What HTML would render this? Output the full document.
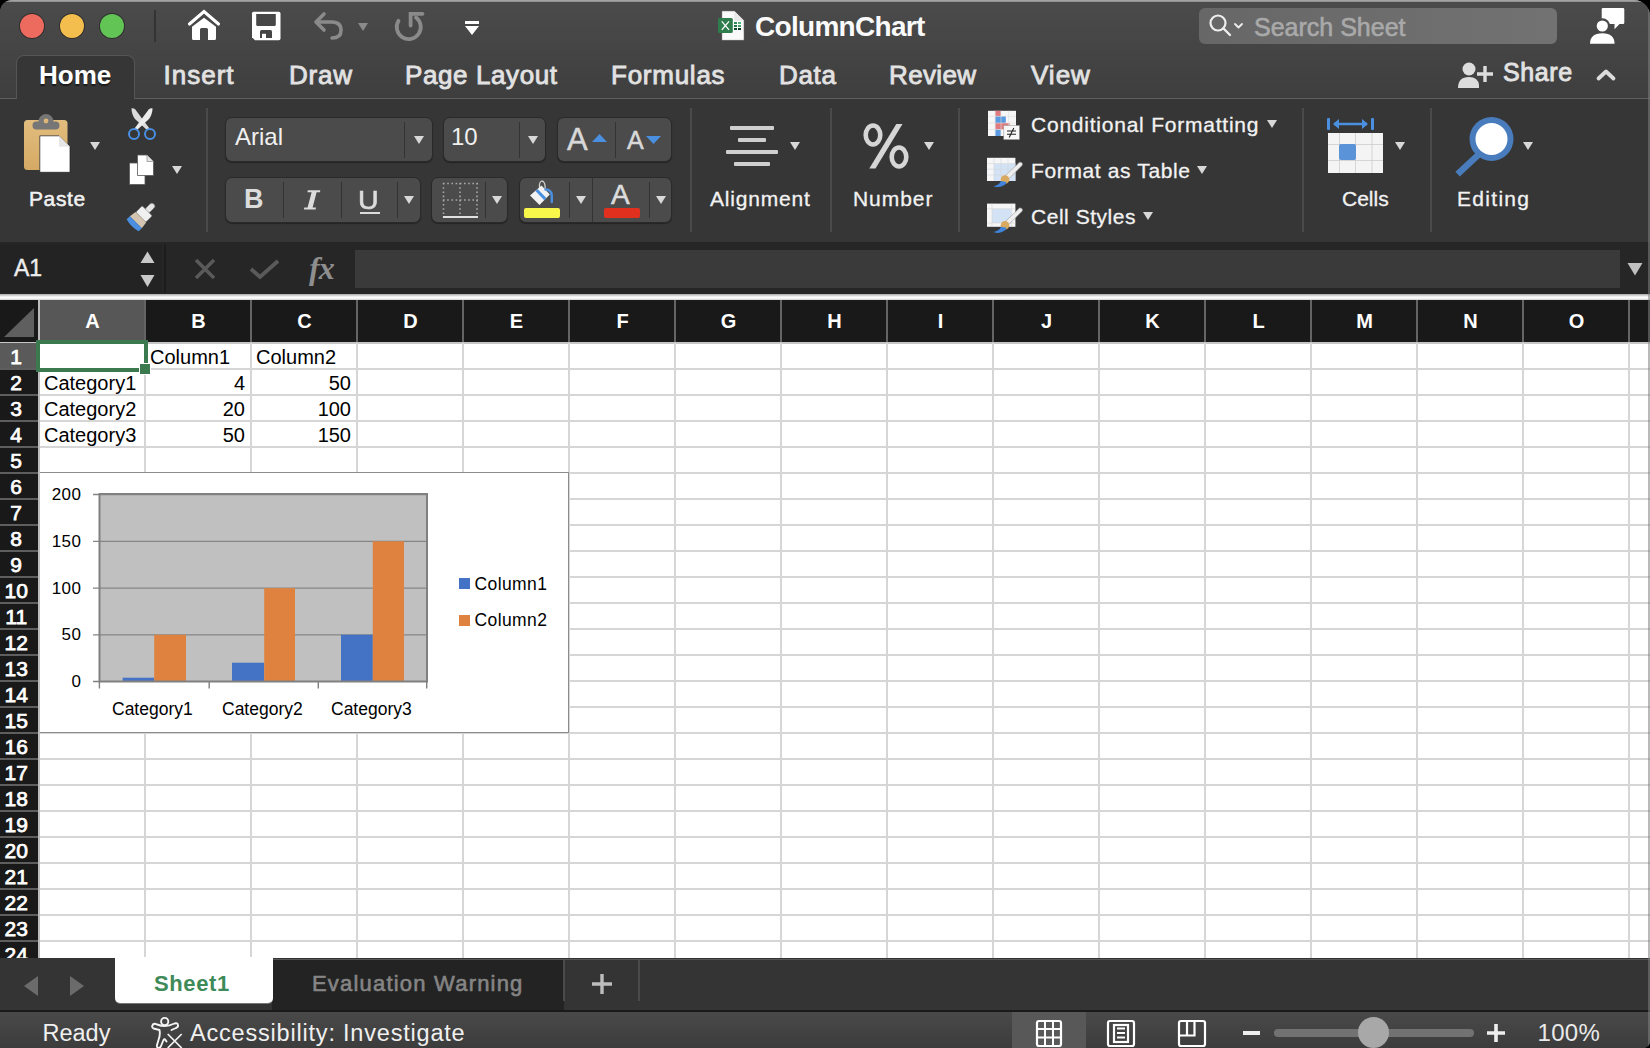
<!DOCTYPE html>
<html><head><meta charset="utf-8">
<style>
*{margin:0;padding:0;box-sizing:border-box}
html,body{width:1650px;height:1048px;overflow:hidden;background:#000;font-family:"Liberation Sans",sans-serif}
.a{position:absolute}
#win{position:absolute;left:0;top:0;width:1650px;height:1048px;border-radius:12px 16px 7px 0;overflow:hidden;background:#3b3b3b}
.t{position:absolute;white-space:nowrap;line-height:1}
.dd{position:absolute;width:0;height:0;border-left:5px solid transparent;border-right:5px solid transparent;border-top:8px solid #d8d8d8}
.sep{position:absolute;width:2px;background:#4a4a4a}
.box{position:absolute;background:#4b4b4b;border:1px solid #2a2a2a;border-radius:7px;box-shadow:0 1px 1px rgba(0,0,0,.35)}
.bsep{position:absolute;width:1px;background:#333}
.rib{color:#f2f2f2;font-size:21px;-webkit-text-stroke:.3px #f2f2f2}
</style></head><body>
<div id="win">
  <!-- title bar -->
  <div class="a" style="left:0;top:0;width:1650px;height:99px;background:linear-gradient(#4b4b4b,#3e3e3e)"></div>
  <div class="a" style="left:0;top:0;width:1650px;height:2px;background:linear-gradient(#ababab,#8a8a8a)"></div>
  <!-- traffic lights -->
  <div class="a" style="left:20px;top:14px;width:24px;height:24px;border-radius:50%;background:#ed6a5e;box-shadow:0 0 0 1px #2f2f2f"></div>
  <div class="a" style="left:60px;top:14px;width:24px;height:24px;border-radius:50%;background:#f4be4f;box-shadow:0 0 0 1px #2f2f2f"></div>
  <div class="a" style="left:100px;top:14px;width:24px;height:24px;border-radius:50%;background:#61c454;box-shadow:0 0 0 1px #2f2f2f"></div>
  <div class="a" style="left:154px;top:10px;width:2px;height:32px;background:#333"></div>


  <!-- tabs row -->
  <div class="a" style="left:0;top:98px;width:1650px;height:1px;background:#5e5e5e"></div>
  <div class="a" style="left:16px;top:55px;width:119px;height:45px;background:#363636;border:1px solid #555;border-bottom:none;border-radius:8px 8px 0 0"></div>

  <!-- ribbon body -->
  <div class="a" style="left:0;top:99px;width:1650px;height:143px;background:#363636"></div>

  <!-- formula bar -->
  <div class="a" style="left:0;top:242px;width:1650px;height:52px;background:#262626"></div>

  <!-- separator -->
  <div class="a" style="left:0;top:294px;width:1650px;height:6px;background:linear-gradient(#a9a9a9,#f2f2f2 45%,#ffffff 65%,#cfcfcf)"></div>

  <!-- grid area -->
  <div class="a" style="left:0;top:300px;width:1650px;height:658px;background:#fff"></div>

  <!-- sheet tabs -->
  <div class="a" style="left:0;top:958px;width:1650px;height:52px;background:#343434"></div>
  <!-- status bar -->
  <div class="a" style="left:0;top:1010px;width:1650px;height:38px;background:#3e3e3e"></div>
  <!-- quick access icons -->
  <svg class="a" style="left:184px;top:6px" width="40" height="38" viewBox="184 6 40 38">
    <path d="M189.5 24 L204 11.5 L218.5 24" fill="none" stroke="#fff" stroke-width="3.1" stroke-linecap="round" stroke-linejoin="miter"/>
    <path d="M192 26.7 L204 17.8 L216 26.7 V38.5 Q216 40 214.5 40 H208 V29.5 Q208 28 206.5 28 H201.5 Q200 28 200 29.5 V40 H193.5 Q192 40 192 38.5 Z" fill="#fff"/>
  </svg>
  <svg class="a" style="left:250px;top:10px" width="32" height="32" viewBox="250 10 32 32">
    <path d="M253.5 11.7 H278.8 Q280.5 11.7 280.5 13.4 V38.6 Q280.5 40.3 278.8 40.3 H255 L252 37.3 V13.2 Q252 11.7 253.5 11.7 Z" fill="#fff"/>
    <path d="M256.2 14 H275.8 V24.5 Q275.8 26 274.3 26 H257.7 Q256.2 26 256.2 24.5 Z" fill="#474747"/>
    <path d="M260 38 V31.5 Q260 30 261.5 30 H270.5 Q272 30 272 31.5 V38 Z" fill="#444"/>
    <rect x="262" y="33.8" width="4" height="4.2" fill="#fff"/>
  </svg>
  <svg class="a" style="left:312px;top:11px" width="34" height="30" viewBox="0 0 34 30">
    <path d="M12 3 L4 11 L12 19" fill="none" stroke="#8a8a8a" stroke-width="3.6" stroke-linecap="round" stroke-linejoin="round"/>
    <path d="M5 11 H20 Q29 11 29 19.5 Q29 27 20 27" fill="none" stroke="#8a8a8a" stroke-width="3.6" stroke-linecap="round"/>
  </svg>
  <div class="dd" style="left:358px;top:23px;border-top-color:#8a8a8a;border-left-width:5px;border-right-width:5px;border-top-width:8px"></div>
  <svg class="a" style="left:390px;top:6px" width="40" height="40" viewBox="390 6 40 40">
    <path d="M398.5 20.8 A12 12 0 1 0 416 17.5" fill="none" stroke="#8a8a8a" stroke-width="3.8" stroke-linecap="round"/>
    <path d="M410.6 25.5 V13.8 H422.5" fill="none" stroke="#8a8a8a" stroke-width="3.8" stroke-linecap="round" stroke-linejoin="miter"/>
  </svg>
  <div class="a" style="left:465px;top:21px;width:14px;height:3px;background:#fff"></div>
  <div class="dd" style="left:465px;top:26px;border-left-width:7px;border-right-width:7px;border-top:9px solid #fff"></div>

  <!-- title -->
  <svg class="a" style="left:714px;top:8px" width="34" height="36" viewBox="714 8 34 36">
    <path d="M721.7 10.8 H734.2 L744.2 20.8 V40.4 H721.7 Z" fill="#fafafa" stroke="#2a2a2a" stroke-width=".6"/>
    <path d="M734.2 10.8 V20.8 H744.2 Z" fill="#e9e9e9"/>
    <g fill="#2e8b57"><rect x="734" y="22" width="3" height="2"/><rect x="738" y="22" width="3" height="2" fill="#4cb77a"/><rect x="734" y="25" width="3" height="2" fill="#217346"/><rect x="738" y="25" width="3" height="2" fill="#3fa468"/><rect x="734" y="28" width="3" height="2" fill="#0f4a2a"/><rect x="738" y="28" width="3" height="2" fill="#0b3a20"/></g>
    <rect x="718" y="18.1" width="14.8" height="14.8" rx="1.5" fill="#2f7d4c"/>
    <path d="M721.8 21.3 L729 29.8 M729 21.3 L721.8 29.8" stroke="#fff" stroke-width="1.3"/>
  </svg>
  <div class="t" style="left:755px;top:13.3px;font-size:28px;font-weight:bold;color:#fafafa;letter-spacing:-.7px">ColumnChart</div>

  <!-- search -->
  <div class="a" style="left:1199px;top:8px;width:358px;height:36px;border-radius:6px;background:linear-gradient(90deg,#676767,#727272)"></div>
  <svg class="a" style="left:1208px;top:13px" width="40" height="26" viewBox="0 0 40 26">
    <circle cx="10" cy="10" r="7.5" fill="none" stroke="#eee" stroke-width="2.2"/>
    <path d="M15.5 15.5 L22 22" stroke="#eee" stroke-width="2.4" stroke-linecap="round"/>
    <path d="M27 11 L30.5 14.5 L34 11" fill="none" stroke="#eee" stroke-width="1.8" stroke-linecap="round" stroke-linejoin="round"/>
  </svg>
  <div class="t" style="left:1254px;top:14.8px;font-size:25px;color:#a9a9a9;-webkit-text-stroke:.6px #a9a9a9">Search Sheet</div>
  <!-- person/comment icon -->
  <svg class="a" style="left:1585px;top:4px" width="45" height="44" viewBox="1585 4 45 44">
    <path d="M1603 8 H1623 Q1624.3 8 1624.3 9.3 V22.8 Q1624.3 24.1 1623 24.1 H1619.5 L1614.5 29.3 V24.1 H1603 Q1601.7 24.1 1601.7 22.8 V9.3 Q1601.7 8 1603 8 Z" fill="#fff"/>
    <circle cx="1602.3" cy="26" r="7.8" fill="#484848"/>
    <circle cx="1602.3" cy="26" r="5.6" fill="#fff"/>
    <path d="M1590 43.8 Q1590 33.2 1602.3 33.2 Q1614.6 33.2 1614.6 43.8 Z" fill="#fff"/>
  </svg>

  <!-- tabs -->
  <div class="t" style="left:39px;top:62px;font-size:26px;font-weight:bold;color:#fff;text-shadow:0 2px 1px rgba(0,0,0,.5)">Home</div>
  <div class="t" style="left:163.5px;top:62px;font-size:26px;color:#e2e2e2;-webkit-text-stroke:.85px #e2e2e2;letter-spacing:1.0px">Insert</div>
  <div class="t" style="left:289px;top:62px;font-size:26px;color:#e2e2e2;-webkit-text-stroke:.85px #e2e2e2;letter-spacing:0.8px">Draw</div>
  <div class="t" style="left:405px;top:62px;font-size:26px;color:#e2e2e2;-webkit-text-stroke:.85px #e2e2e2;letter-spacing:0.6px">Page Layout</div>
  <div class="t" style="left:611px;top:62px;font-size:26px;color:#e2e2e2;-webkit-text-stroke:.85px #e2e2e2;letter-spacing:0.75px">Formulas</div>
  <div class="t" style="left:779px;top:62px;font-size:26px;color:#e2e2e2;-webkit-text-stroke:.85px #e2e2e2;letter-spacing:0.65px">Data</div>
  <div class="t" style="left:889px;top:62px;font-size:26px;color:#e2e2e2;-webkit-text-stroke:.85px #e2e2e2;letter-spacing:0.35px">Review</div>
  <div class="t" style="left:1031px;top:62px;font-size:26px;color:#e2e2e2;-webkit-text-stroke:.85px #e2e2e2;letter-spacing:1.0px">View</div>
  <svg class="a" style="left:1458px;top:61px" width="38" height="28" viewBox="0 0 38 28">
    <circle cx="11" cy="8" r="6.5" fill="#ddd"/>
    <path d="M0 27 Q0 16 11 16 Q20 16 21 24 V27 Z" fill="#ddd"/>
    <path d="M27 5 V21 M19 13 H35" stroke="#ddd" stroke-width="3.4"/>
  </svg>
  <div class="t" style="left:1503px;top:60px;font-size:25px;color:#e2e2e2;-webkit-text-stroke:.9px #e2e2e2;letter-spacing:.6px">Share</div>
  <svg class="a" style="left:1594px;top:66px" width="24" height="16" viewBox="0 0 24 16">
    <path d="M4.5 12.5 L12 5.5 L19.5 12.5" fill="none" stroke="#dcdcdc" stroke-width="3.8" stroke-linecap="round" stroke-linejoin="round"/>
  </svg>


  <!-- ===== RIBBON ===== -->
  <!-- paste -->
  <svg class="a" style="left:22px;top:112px" width="52" height="62" viewBox="0 0 52 62">
    <defs><linearGradient id="cbg" x1="0" y1="0" x2="0" y2="1"><stop offset="0" stop-color="#e2bd7e"/><stop offset="1" stop-color="#d5a964"/></linearGradient></defs>
    <rect x="2" y="8" width="43.5" height="50" rx="3.5" fill="url(#cbg)"/>
    <path d="M14.5 9.5 H16.5 A7.5 7.5 0 0 1 31.5 9.5 H33.5 Q37.5 9.5 37.5 13.5 Q37.5 17.5 33.5 17.5 H14.5 Q10.5 17.5 10.5 13.5 Q10.5 9.5 14.5 9.5 Z" fill="#767676"/>
    <circle cx="24" cy="9" r="2.4" fill="#dcb677"/>
    <path d="M17.8 23.8 H37 L48 34.8 V60.3 H17.8 Z" fill="#fff" stroke="#1f1f1f" stroke-width=".7"/>
    <path d="M37 23.8 V34.8 H48 Z" fill="#e6e6e6"/>
  </svg>
  <div class="dd" style="left:90px;top:142px"></div>
  <div class="t rib" style="left:29px;top:188px;letter-spacing:.6px;-webkit-text-stroke:.5px #f2f2f2">Paste</div>
  <!-- scissors -->
  <svg class="a" style="left:120px;top:104px" width="40" height="40" viewBox="120 104 40 40">
    <path d="M131.5 108.2 Q134 108 135.3 109.5 L149.5 128.5 L147.2 130.3 L135 119 Q131.5 114 131.5 108.2 Z" fill="#dcdcdc"/>
    <path d="M152.5 108.2 Q150 108 148.7 109.5 L134.5 128.5 L136.8 130.3 L149 119 Q152.5 114 152.5 108.2 Z" fill="#ececec"/>
    <circle cx="134" cy="134" r="5" fill="none" stroke="#4a8fe0" stroke-width="2"/>
    <circle cx="150" cy="134" r="5" fill="none" stroke="#4a8fe0" stroke-width="2"/>
  </svg>
  <!-- copy -->
  <svg class="a" style="left:128px;top:154px" width="30" height="32" viewBox="0 0 30 32">
    <path d="M1.5 9 H17 V30.5 H1.5 Z" fill="#fff" stroke="#555" stroke-width=".8"/>
    <path d="M9.5 1 H19 L25.5 7.5 V21.5 H9.5 Z" fill="#fff" stroke="#555" stroke-width=".8"/>
    <path d="M19 1 V7.5 H25.5" fill="#e5e5e5" stroke="#888" stroke-width=".7"/>
  </svg>
  <div class="dd" style="left:172px;top:166px"></div>
  <!-- format painter -->
  <svg class="a" style="left:120px;top:198px" width="42" height="36" viewBox="120 198 42 36">
    <g transform="translate(141.5 216.5) rotate(45)">
      <rect x="-2.8" y="-17.5" width="5.6" height="11" rx="2.8" fill="#e6e6e6" stroke="#8a8a8a" stroke-width=".6"/>
      <rect x="-7" y="-8" width="14" height="9" rx="1.2" fill="#f0f0f0" stroke="#8a8a8a" stroke-width=".6"/>
      <path d="M-7.5 1 L7.5 1 L8.5 8 L-8.5 8 Z" fill="#d3c5b0"/>
      <path d="M-8.5 8 L8.5 8 L8.5 12.5 Q0 15 -8.5 12.5 Z" fill="#4a8fe0"/>
    </g>
  </svg>
  <div class="sep" style="left:206px;top:108px;height:124px"></div>

  <!-- font group -->
  <div class="box" style="left:225px;top:117px;width:208px;height:45px"></div>
  <div class="bsep" style="left:404px;top:122px;height:36px"></div>
  <div class="t" style="left:235px;top:125px;font-size:24px;color:#f0f0f0">Arial</div>
  <div class="dd" style="left:414px;top:136px"></div>
  <div class="box" style="left:443px;top:117px;width:103px;height:45px"></div>
  <div class="bsep" style="left:519px;top:122px;height:36px"></div>
  <div class="t" style="left:451px;top:125px;font-size:24px;color:#f0f0f0">10</div>
  <div class="dd" style="left:528px;top:136px"></div>
  <div class="box" style="left:557px;top:117px;width:115px;height:45px"></div>
  <div class="bsep" style="left:615px;top:122px;height:36px"></div>
  <div class="t" style="left:567px;top:124px;font-size:31px;color:#d8d8d8;-webkit-text-stroke:.5px #d8d8d8">A</div>
  <svg class="a" style="left:592px;top:133px" width="15" height="9"><path d="M0 9 L7.5 1 L15 9 Z" fill="#4a8fe0"/></svg>
  <div class="t" style="left:627px;top:128px;font-size:25px;color:#d8d8d8;-webkit-text-stroke:.5px #d8d8d8">A</div>
  <svg class="a" style="left:646px;top:136px" width="15" height="9"><path d="M0 0 L15 0 L7.5 8 Z" fill="#4a8fe0"/></svg>

  <div class="box" style="left:225px;top:177px;width:196px;height:45.5px"></div>
  <div class="bsep" style="left:283px;top:182px;height:36px"></div>
  <div class="bsep" style="left:341px;top:182px;height:36px"></div>
  <div class="bsep" style="left:397px;top:182px;height:36px"></div>
  <div class="t" style="left:244px;top:186px;font-size:27px;font-weight:bold;color:#dcdcdc">B</div>
  <svg class="a" style="left:300px;top:186px" width="26" height="28" viewBox="300 186 26 28">
    <path d="M307.8 190.2 H320.3 L320 192.3 H316.6 L312.6 207.4 H316 L315.6 209.6 H303.9 L304.3 207.4 H307.6 L311.6 192.3 H307.4 Z" fill="#dcdcdc"/>
  </svg>
  <div class="t" style="left:358px;top:187px;font-size:26px;color:#dcdcdc;-webkit-text-stroke:.6px #dcdcdc;transform:scaleX(1.1);transform-origin:left top">U</div>
  <div class="a" style="left:360px;top:212px;width:20px;height:2px;background:#dcdcdc"></div>
  <div class="dd" style="left:404px;top:196px"></div>

  <div class="box" style="left:431px;top:177px;width:77px;height:45.5px"></div>
  <div class="bsep" style="left:485px;top:182px;height:36px"></div>
  <svg class="a" style="left:442px;top:182px" width="37" height="37" viewBox="0 0 37 37">
    <g fill="none" stroke="#a8a8a8" stroke-width="1.6" stroke-dasharray="1.6 2.6">
      <path d="M1.5 1 V35 M18 1 V35 M35 1 V35 M1 1.5 H36 M1 18 H36"/>
    </g>
    <path d="M1 35 H36" stroke="#e0e0e0" stroke-width="2"/>
  </svg>
  <div class="dd" style="left:492px;top:196px"></div>

  <div class="box" style="left:519px;top:177px;width:153px;height:45.5px"></div>
  <div class="bsep" style="left:569px;top:182px;height:36px"></div>
  <div class="a" style="left:592px;top:178px;width:1px;height:44px;background:#333"></div>
  <div class="bsep" style="left:649px;top:182px;height:36px"></div>
  <svg class="a" style="left:525px;top:178px" width="32" height="30" viewBox="525 178 32 30">
    <path d="M540 190.5 Q538.3 182 541.8 181 Q545.5 181 545.3 190.5" fill="none" stroke="#d0d0d0" stroke-width="1.3"/>
    <path d="M541.5 185.5 L549.8 194.5 L539.5 205 L530 195.5 Z" fill="#f2f2f2"/>
    <path d="M537.6 188.9 L546.4 198 L544.3 200.2 L535.4 191 Z" fill="#4a8fe0"/>
    <path d="M545.5 189.5 Q551.5 189.5 551.8 196 L551.8 202" fill="none" stroke="#4a8fe0" stroke-width="2.4" stroke-linecap="round"/>
  </svg>
  <div class="a" style="left:524px;top:208px;width:36px;height:10px;border-radius:2px;background:#f8f64a"></div>
  <div class="dd" style="left:576px;top:196px"></div>
  <div class="t" style="left:611px;top:180.5px;font-size:28px;color:#dcdcdc;-webkit-text-stroke:.6px #dcdcdc">A</div>
  <div class="a" style="left:604px;top:208px;width:36px;height:10px;border-radius:2px;background:#e2301f"></div>
  <div class="dd" style="left:656px;top:196px"></div>
  <div class="sep" style="left:690px;top:108px;height:124px"></div>

  <!-- alignment -->
  <div class="a" style="left:730px;top:126px;width:44px;height:4px;border-radius:1px;background:#cfcfcf"></div>
  <div class="a" style="left:738px;top:138px;width:28px;height:4px;border-radius:1px;background:#cfcfcf"></div>
  <div class="a" style="left:726px;top:150px;width:52px;height:4px;border-radius:1px;background:#cfcfcf"></div>
  <div class="a" style="left:734px;top:162px;width:36px;height:4px;border-radius:1px;background:#cfcfcf"></div>
  <div class="dd" style="left:790px;top:142px"></div>
  <div class="t rib" style="left:710px;top:188px;letter-spacing:.8px">Alignment</div>
  <div class="sep" style="left:830px;top:108px;height:124px"></div>
  <!-- number -->
  <svg class="a" style="left:855px;top:118px" width="60" height="56" viewBox="855 118 60 56">
    <ellipse cx="873" cy="135" rx="7.3" ry="9.5" fill="none" stroke="#d6d6d6" stroke-width="4.6"/>
    <ellipse cx="899" cy="157" rx="7.3" ry="9.5" fill="none" stroke="#d6d6d6" stroke-width="4.6"/>
    <path d="M896.3 124 L902.5 124 L875.5 168.5 L869.3 168.5 Z" fill="#d6d6d6"/>
  </svg>
  <div class="dd" style="left:924px;top:142px"></div>
  <div class="t rib" style="left:853px;top:188px;letter-spacing:.95px">Number</div>
  <div class="sep" style="left:958px;top:108px;height:124px"></div>

  <!-- styles -->
  <svg class="a" style="left:985px;top:108px" width="40" height="34" viewBox="985 108 40 34">
    <rect x="988" y="110.8" width="28" height="25.2" fill="#f7f7f7"/>
    <rect x="995.2" y="110.8" width="5.6" height="5.5" fill="#df7a7e"/>
    <rect x="995.2" y="116.3" width="10.6" height="6.7" fill="#5a9ae2"/>
    <rect x="995.2" y="123" width="14.4" height="6.5" fill="#df7a7e"/>
    <rect x="995.2" y="129.5" width="5.6" height="6.5" fill="#5a9ae2"/>
    <path d="M988 116.3 H1016 M988 123 H1016 M988 129.5 H1016 M995.2 110.8 V136 M1001 110.8 V136 M1008.6 110.8 V136" stroke="#dedede" stroke-width=".6"/>
    <rect x="1003.8" y="125.6" width="15.5" height="13.9" fill="#f8f8f8" stroke="#a0a0a0" stroke-width=".6"/>
    <path d="M1007 131 H1016 M1007 134.3 H1016 M1013.8 128 L1009.2 137.5" stroke="#222" stroke-width="1.1"/>
  </svg>
  <div class="t rib" style="left:1031px;top:114px;letter-spacing:.77px">Conditional Formatting</div>
  <div class="dd" style="left:1267px;top:120px"></div>
  <svg class="a" style="left:985px;top:155px" width="42" height="34" viewBox="985 155 42 34">
    <rect x="987" y="157.8" width="28.4" height="23.2" fill="#f6f6f6"/>
    <rect x="994" y="163.6" width="21.4" height="17.4" fill="#d3e2f4"/>
    <path d="M987 163.6 H1015.4 M987 169.2 H1015.4 M987 175 H1015.4 M994 157.8 V181 M1001 157.8 V181 M1008 157.8 V181" stroke="#d0d6de" stroke-width=".6"/>
    <path d="M1019.5 162.2 Q1023.5 162 1022 165.5 L1008 179.5 L1004.5 176.5 Z" fill="#eeeeee" stroke="#9a9a9a" stroke-width=".6"/>
    <circle cx="1005" cy="179.5" r="4.3" fill="#d9a95f"/>
    <path d="M1001 181 Q999 185.5 993.5 186.2 Q999.5 188.5 1004.5 185 Q1006.5 183.5 1006.5 182 Z" fill="#3f84da"/>
  </svg>
  <div class="t rib" style="left:1031px;top:160px;letter-spacing:.63px">Format as Table</div>
  <div class="dd" style="left:1197px;top:166px"></div>
  <svg class="a" style="left:985px;top:201px" width="42" height="34" viewBox="985 201 42 34">
    <rect x="987" y="203.6" width="28.4" height="23.2" fill="#f6f6f6"/>
    <rect x="992" y="208.7" width="19.6" height="14.3" fill="#d3e2f4"/>
    <path d="M987 208.7 H1015.4 M987 223 H1015.4 M992 203.6 V226.8 M1011.6 203.6 V226.8" stroke="#d6d6d6" stroke-width=".6"/>
    <path d="M1019.5 208 Q1023.5 207.8 1022 211.3 L1008 225.3 L1004.5 222.3 Z" fill="#eeeeee" stroke="#9a9a9a" stroke-width=".6"/>
    <circle cx="1005" cy="225.3" r="4.3" fill="#d9a95f"/>
    <path d="M1001 226.8 Q999 231.3 993.5 232 Q999.5 234.3 1004.5 230.8 Q1006.5 229.3 1006.5 227.8 Z" fill="#3f84da"/>
  </svg>
  <div class="t rib" style="left:1031px;top:206px;letter-spacing:.53px">Cell Styles</div>
  <div class="dd" style="left:1143px;top:212px"></div>
  <div class="sep" style="left:1302px;top:108px;height:124px"></div>

  <!-- cells -->
  <svg class="a" style="left:1326px;top:116px" width="58" height="58" viewBox="0 0 58 58">
    <rect x="1" y="2" width="3" height="12" rx="1" fill="#4a8fe0"/>
    <rect x="45" y="2" width="3" height="12" rx="1" fill="#4a8fe0"/>
    <path d="M8 8 H41" stroke="#4a8fe0" stroke-width="2.6"/>
    <path d="M13 3 L7 8 L13 13 Z M36 3 L42 8 L36 13 Z" fill="#4a8fe0"/>
    <rect x="2" y="17" width="55" height="40" fill="#f4f4f4"/>
    <path d="M2 28.5 H57 M2 44.5 H57 M13.5 17 V57 M29.5 17 V57 M46 17 V57" stroke="#cdcdcd" stroke-width=".8"/>
    <rect x="13" y="28" width="17" height="16" rx="2" fill="#5a93d8"/>
  </svg>
  <div class="dd" style="left:1395px;top:142px"></div>
  <div class="t rib" style="left:1342px;top:188px">Cells</div>
  <div class="sep" style="left:1430px;top:108px;height:124px"></div>
  <!-- editing -->
  <svg class="a" style="left:1450px;top:110px" width="70" height="70" viewBox="1450 110 70 70">
    <defs><filter id="bl" x="-20%" y="-20%" width="140%" height="140%"><feGaussianBlur stdDeviation=".7"/></filter></defs>
    <g filter="url(#bl)">
    <path d="M1476 157 L1460 172" stroke="#4a7cbc" stroke-width="6.5" stroke-linecap="square"/>
    <circle cx="1491.5" cy="139" r="22" fill="#4a7cbc"/>
    <circle cx="1491.5" cy="139" r="16" fill="#fff"/>
    </g>
  </svg>
  <div class="dd" style="left:1523px;top:142px"></div>
  <div class="t rib" style="left:1457px;top:188px;letter-spacing:1.3px">Editing</div>

  <!-- ===== FORMULA BAR ===== -->
  <div class="a" style="left:0;top:244px;width:162px;height:49px;background:#232323"></div>
  <div class="a" style="left:164px;top:244px;width:2px;height:49px;background:#1c1c1c"></div>
  <div class="t" style="left:14px;top:257px;font-size:23px;color:#eeeeee;-webkit-text-stroke:.4px #eee">A1</div>
  <svg class="a" style="left:139px;top:250px" width="17" height="39" viewBox="0 0 17 39">
    <path d="M1.5 13 L8.5 1.5 L15.5 13 Z" fill="#c8c8c8"/>
    <path d="M1.5 25 L15.5 25 L8.5 37 Z" fill="#c8c8c8"/>
  </svg>
  <svg class="a" style="left:193px;top:258px" width="24" height="22" viewBox="0 0 24 22">
    <path d="M3 2 L21 20 M21 2 L3 20" stroke="#5a5a5a" stroke-width="3.5"/>
  </svg>
  <svg class="a" style="left:249px;top:258px" width="31" height="22" viewBox="0 0 31 22">
    <path d="M2 11 L11 19 L29 3" fill="none" stroke="#5a5a5a" stroke-width="3.8"/>
  </svg>
  <div class="t" style="left:309px;top:252px;font-size:32px;font-family:'Liberation Serif',serif;font-style:italic;font-weight:bold;color:#8e8e8e;letter-spacing:-1px">fx</div>
  <div class="a" style="left:355px;top:250px;width:1265px;height:38px;background:#3a3a3a"></div>
  <svg class="a" style="left:1627px;top:262px" width="16" height="14" viewBox="0 0 16 14">
    <path d="M0.5 1 L15.5 1 L8 13.5 Z" fill="#c0c0c0"/>
  </svg>

  <!-- ===== HEADERS ===== -->
  <div class="a" style="left:0;top:300px;width:1650px;height:42px;background:#191919"></div>
  <div class="a" style="left:40px;top:300px;width:105px;height:42px;background:#575757"></div>
  <svg class="a" style="left:0;top:300px" width="38" height="42"><path d="M4 37 L34 37 L34 8 Z" fill="#5f5f5f"/></svg>
  <div class="a" style="left:38px;top:300px;width:2px;height:658px;background:#bdbdbd"></div>
  <div class="a" style="left:0;top:342px;width:1650px;height:2px;background:#c6c6c6"></div>
  <div class="t" style="left:40px;top:311px;width:105px;text-align:center;font-size:20px;font-weight:bold;color:#fff">A</div>
  <div class="a" style="left:144px;top:300px;width:2px;height:42px;background:#646464"></div>
  <div class="t" style="left:146px;top:311px;width:105px;text-align:center;font-size:20px;font-weight:bold;color:#fff">B</div>
  <div class="a" style="left:250px;top:300px;width:2px;height:42px;background:#646464"></div>
  <div class="t" style="left:252px;top:311px;width:105px;text-align:center;font-size:20px;font-weight:bold;color:#fff">C</div>
  <div class="a" style="left:356px;top:300px;width:2px;height:42px;background:#646464"></div>
  <div class="t" style="left:358px;top:311px;width:105px;text-align:center;font-size:20px;font-weight:bold;color:#fff">D</div>
  <div class="a" style="left:462px;top:300px;width:2px;height:42px;background:#646464"></div>
  <div class="t" style="left:464px;top:311px;width:105px;text-align:center;font-size:20px;font-weight:bold;color:#fff">E</div>
  <div class="a" style="left:568px;top:300px;width:2px;height:42px;background:#646464"></div>
  <div class="t" style="left:570px;top:311px;width:105px;text-align:center;font-size:20px;font-weight:bold;color:#fff">F</div>
  <div class="a" style="left:674px;top:300px;width:2px;height:42px;background:#646464"></div>
  <div class="t" style="left:676px;top:311px;width:105px;text-align:center;font-size:20px;font-weight:bold;color:#fff">G</div>
  <div class="a" style="left:780px;top:300px;width:2px;height:42px;background:#646464"></div>
  <div class="t" style="left:782px;top:311px;width:105px;text-align:center;font-size:20px;font-weight:bold;color:#fff">H</div>
  <div class="a" style="left:886px;top:300px;width:2px;height:42px;background:#646464"></div>
  <div class="t" style="left:888px;top:311px;width:105px;text-align:center;font-size:20px;font-weight:bold;color:#fff">I</div>
  <div class="a" style="left:992px;top:300px;width:2px;height:42px;background:#646464"></div>
  <div class="t" style="left:994px;top:311px;width:105px;text-align:center;font-size:20px;font-weight:bold;color:#fff">J</div>
  <div class="a" style="left:1098px;top:300px;width:2px;height:42px;background:#646464"></div>
  <div class="t" style="left:1100px;top:311px;width:105px;text-align:center;font-size:20px;font-weight:bold;color:#fff">K</div>
  <div class="a" style="left:1204px;top:300px;width:2px;height:42px;background:#646464"></div>
  <div class="t" style="left:1206px;top:311px;width:105px;text-align:center;font-size:20px;font-weight:bold;color:#fff">L</div>
  <div class="a" style="left:1310px;top:300px;width:2px;height:42px;background:#646464"></div>
  <div class="t" style="left:1312px;top:311px;width:105px;text-align:center;font-size:20px;font-weight:bold;color:#fff">M</div>
  <div class="a" style="left:1416px;top:300px;width:2px;height:42px;background:#646464"></div>
  <div class="t" style="left:1418px;top:311px;width:105px;text-align:center;font-size:20px;font-weight:bold;color:#fff">N</div>
  <div class="a" style="left:1522px;top:300px;width:2px;height:42px;background:#646464"></div>
  <div class="t" style="left:1524px;top:311px;width:105px;text-align:center;font-size:20px;font-weight:bold;color:#fff">O</div>
  <div class="a" style="left:1628px;top:300px;width:2px;height:42px;background:#646464"></div>
  <div class="a" style="left:0;top:343px;width:38px;height:615px;background:#191919"></div>
  <div class="a" style="left:0;top:343px;width:38px;height:26px;background:#5a5a5a"></div>
  <div class="t" style="left:1.7px;top:346px;width:29px;text-align:center;font-size:21px;color:#fff;-webkit-text-stroke:.75px #fff">1</div>
  <div class="a" style="left:0;top:368px;width:38px;height:2px;background:#5e5e5e"></div>
  <div class="t" style="left:1.7px;top:372px;width:29px;text-align:center;font-size:21px;color:#fff;-webkit-text-stroke:.75px #fff">2</div>
  <div class="a" style="left:0;top:394px;width:38px;height:2px;background:#5e5e5e"></div>
  <div class="t" style="left:1.7px;top:398px;width:29px;text-align:center;font-size:21px;color:#fff;-webkit-text-stroke:.75px #fff">3</div>
  <div class="a" style="left:0;top:420px;width:38px;height:2px;background:#5e5e5e"></div>
  <div class="t" style="left:1.7px;top:424px;width:29px;text-align:center;font-size:21px;color:#fff;-webkit-text-stroke:.75px #fff">4</div>
  <div class="a" style="left:0;top:446px;width:38px;height:2px;background:#5e5e5e"></div>
  <div class="t" style="left:1.7px;top:450px;width:29px;text-align:center;font-size:21px;color:#fff;-webkit-text-stroke:.75px #fff">5</div>
  <div class="a" style="left:0;top:472px;width:38px;height:2px;background:#5e5e5e"></div>
  <div class="t" style="left:1.7px;top:476px;width:29px;text-align:center;font-size:21px;color:#fff;-webkit-text-stroke:.75px #fff">6</div>
  <div class="a" style="left:0;top:498px;width:38px;height:2px;background:#5e5e5e"></div>
  <div class="t" style="left:1.7px;top:502px;width:29px;text-align:center;font-size:21px;color:#fff;-webkit-text-stroke:.75px #fff">7</div>
  <div class="a" style="left:0;top:524px;width:38px;height:2px;background:#5e5e5e"></div>
  <div class="t" style="left:1.7px;top:528px;width:29px;text-align:center;font-size:21px;color:#fff;-webkit-text-stroke:.75px #fff">8</div>
  <div class="a" style="left:0;top:550px;width:38px;height:2px;background:#5e5e5e"></div>
  <div class="t" style="left:1.7px;top:554px;width:29px;text-align:center;font-size:21px;color:#fff;-webkit-text-stroke:.75px #fff">9</div>
  <div class="a" style="left:0;top:576px;width:38px;height:2px;background:#5e5e5e"></div>
  <div class="t" style="left:1.7px;top:580px;width:29px;text-align:center;font-size:21px;color:#fff;-webkit-text-stroke:.75px #fff">10</div>
  <div class="a" style="left:0;top:602px;width:38px;height:2px;background:#5e5e5e"></div>
  <div class="t" style="left:1.7px;top:606px;width:29px;text-align:center;font-size:21px;color:#fff;-webkit-text-stroke:.75px #fff">11</div>
  <div class="a" style="left:0;top:628px;width:38px;height:2px;background:#5e5e5e"></div>
  <div class="t" style="left:1.7px;top:632px;width:29px;text-align:center;font-size:21px;color:#fff;-webkit-text-stroke:.75px #fff">12</div>
  <div class="a" style="left:0;top:654px;width:38px;height:2px;background:#5e5e5e"></div>
  <div class="t" style="left:1.7px;top:658px;width:29px;text-align:center;font-size:21px;color:#fff;-webkit-text-stroke:.75px #fff">13</div>
  <div class="a" style="left:0;top:680px;width:38px;height:2px;background:#5e5e5e"></div>
  <div class="t" style="left:1.7px;top:684px;width:29px;text-align:center;font-size:21px;color:#fff;-webkit-text-stroke:.75px #fff">14</div>
  <div class="a" style="left:0;top:706px;width:38px;height:2px;background:#5e5e5e"></div>
  <div class="t" style="left:1.7px;top:710px;width:29px;text-align:center;font-size:21px;color:#fff;-webkit-text-stroke:.75px #fff">15</div>
  <div class="a" style="left:0;top:732px;width:38px;height:2px;background:#5e5e5e"></div>
  <div class="t" style="left:1.7px;top:736px;width:29px;text-align:center;font-size:21px;color:#fff;-webkit-text-stroke:.75px #fff">16</div>
  <div class="a" style="left:0;top:758px;width:38px;height:2px;background:#5e5e5e"></div>
  <div class="t" style="left:1.7px;top:762px;width:29px;text-align:center;font-size:21px;color:#fff;-webkit-text-stroke:.75px #fff">17</div>
  <div class="a" style="left:0;top:784px;width:38px;height:2px;background:#5e5e5e"></div>
  <div class="t" style="left:1.7px;top:788px;width:29px;text-align:center;font-size:21px;color:#fff;-webkit-text-stroke:.75px #fff">18</div>
  <div class="a" style="left:0;top:810px;width:38px;height:2px;background:#5e5e5e"></div>
  <div class="t" style="left:1.7px;top:814px;width:29px;text-align:center;font-size:21px;color:#fff;-webkit-text-stroke:.75px #fff">19</div>
  <div class="a" style="left:0;top:836px;width:38px;height:2px;background:#5e5e5e"></div>
  <div class="t" style="left:1.7px;top:840px;width:29px;text-align:center;font-size:21px;color:#fff;-webkit-text-stroke:.75px #fff">20</div>
  <div class="a" style="left:0;top:862px;width:38px;height:2px;background:#5e5e5e"></div>
  <div class="t" style="left:1.7px;top:866px;width:29px;text-align:center;font-size:21px;color:#fff;-webkit-text-stroke:.75px #fff">21</div>
  <div class="a" style="left:0;top:888px;width:38px;height:2px;background:#5e5e5e"></div>
  <div class="t" style="left:1.7px;top:892px;width:29px;text-align:center;font-size:21px;color:#fff;-webkit-text-stroke:.75px #fff">22</div>
  <div class="a" style="left:0;top:914px;width:38px;height:2px;background:#5e5e5e"></div>
  <div class="t" style="left:1.7px;top:918px;width:29px;text-align:center;font-size:21px;color:#fff;-webkit-text-stroke:.75px #fff">23</div>
  <div class="a" style="left:0;top:940px;width:38px;height:2px;background:#5e5e5e"></div>
  <div class="t" style="left:1.7px;top:944px;width:29px;text-align:center;font-size:21px;color:#fff;-webkit-text-stroke:.75px #fff">24</div>
  <!-- ===== GRID ===== -->
  <div class="a" style="left:144px;top:343px;width:2px;height:615px;background:#d6d6d6"></div>
  <div class="a" style="left:250px;top:343px;width:2px;height:615px;background:#d6d6d6"></div>
  <div class="a" style="left:356px;top:343px;width:2px;height:615px;background:#d6d6d6"></div>
  <div class="a" style="left:462px;top:343px;width:2px;height:615px;background:#d6d6d6"></div>
  <div class="a" style="left:568px;top:343px;width:2px;height:615px;background:#d6d6d6"></div>
  <div class="a" style="left:674px;top:343px;width:2px;height:615px;background:#d6d6d6"></div>
  <div class="a" style="left:780px;top:343px;width:2px;height:615px;background:#d6d6d6"></div>
  <div class="a" style="left:886px;top:343px;width:2px;height:615px;background:#d6d6d6"></div>
  <div class="a" style="left:992px;top:343px;width:2px;height:615px;background:#d6d6d6"></div>
  <div class="a" style="left:1098px;top:343px;width:2px;height:615px;background:#d6d6d6"></div>
  <div class="a" style="left:1204px;top:343px;width:2px;height:615px;background:#d6d6d6"></div>
  <div class="a" style="left:1310px;top:343px;width:2px;height:615px;background:#d6d6d6"></div>
  <div class="a" style="left:1416px;top:343px;width:2px;height:615px;background:#d6d6d6"></div>
  <div class="a" style="left:1522px;top:343px;width:2px;height:615px;background:#d6d6d6"></div>
  <div class="a" style="left:1628px;top:343px;width:2px;height:615px;background:#d6d6d6"></div>
  <div class="a" style="left:40px;top:368px;width:1610px;height:2px;background:#d6d6d6"></div>
  <div class="a" style="left:40px;top:394px;width:1610px;height:2px;background:#d6d6d6"></div>
  <div class="a" style="left:40px;top:420px;width:1610px;height:2px;background:#d6d6d6"></div>
  <div class="a" style="left:40px;top:446px;width:1610px;height:2px;background:#d6d6d6"></div>
  <div class="a" style="left:40px;top:472px;width:1610px;height:2px;background:#d6d6d6"></div>
  <div class="a" style="left:40px;top:498px;width:1610px;height:2px;background:#d6d6d6"></div>
  <div class="a" style="left:40px;top:524px;width:1610px;height:2px;background:#d6d6d6"></div>
  <div class="a" style="left:40px;top:550px;width:1610px;height:2px;background:#d6d6d6"></div>
  <div class="a" style="left:40px;top:576px;width:1610px;height:2px;background:#d6d6d6"></div>
  <div class="a" style="left:40px;top:602px;width:1610px;height:2px;background:#d6d6d6"></div>
  <div class="a" style="left:40px;top:628px;width:1610px;height:2px;background:#d6d6d6"></div>
  <div class="a" style="left:40px;top:654px;width:1610px;height:2px;background:#d6d6d6"></div>
  <div class="a" style="left:40px;top:680px;width:1610px;height:2px;background:#d6d6d6"></div>
  <div class="a" style="left:40px;top:706px;width:1610px;height:2px;background:#d6d6d6"></div>
  <div class="a" style="left:40px;top:732px;width:1610px;height:2px;background:#d6d6d6"></div>
  <div class="a" style="left:40px;top:758px;width:1610px;height:2px;background:#d6d6d6"></div>
  <div class="a" style="left:40px;top:784px;width:1610px;height:2px;background:#d6d6d6"></div>
  <div class="a" style="left:40px;top:810px;width:1610px;height:2px;background:#d6d6d6"></div>
  <div class="a" style="left:40px;top:836px;width:1610px;height:2px;background:#d6d6d6"></div>
  <div class="a" style="left:40px;top:862px;width:1610px;height:2px;background:#d6d6d6"></div>
  <div class="a" style="left:40px;top:888px;width:1610px;height:2px;background:#d6d6d6"></div>
  <div class="a" style="left:40px;top:914px;width:1610px;height:2px;background:#d6d6d6"></div>
  <div class="a" style="left:40px;top:940px;width:1610px;height:2px;background:#d6d6d6"></div>
  <div class="t" style="left:150px;top:347px;font-size:20px;color:#000">Column1</div>
  <div class="t" style="left:256px;top:347px;font-size:20px;color:#000">Column2</div>
  <div class="t" style="left:44px;top:373px;font-size:20px;color:#000">Category1</div>
  <div class="t" style="left:44px;top:399px;font-size:20px;color:#000">Category2</div>
  <div class="t" style="left:44px;top:425px;font-size:20px;color:#000">Category3</div>
  <div class="t" style="left:146px;top:373px;width:99px;text-align:right;font-size:20px;color:#000">4</div>
  <div class="t" style="left:146px;top:399px;width:99px;text-align:right;font-size:20px;color:#000">20</div>
  <div class="t" style="left:146px;top:425px;width:99px;text-align:right;font-size:20px;color:#000">50</div>
  <div class="t" style="left:252px;top:373px;width:99px;text-align:right;font-size:20px;color:#000">50</div>
  <div class="t" style="left:252px;top:399px;width:99px;text-align:right;font-size:20px;color:#000">100</div>
  <div class="t" style="left:252px;top:425px;width:99px;text-align:right;font-size:20px;color:#000">150</div>
  <!-- selection -->
  <div class="a" style="left:36px;top:340px;width:112px;height:32px;border:4px solid #3b7a4f"></div>
  <div class="a" style="left:140px;top:364px;width:10px;height:10px;background:#3b7a4f;box-shadow:0 0 0 1px #fff"></div>

  <!-- ===== CHART ===== -->
  <div class="a" style="left:40px;top:472px;width:529px;height:261px;background:#fff;border:1px solid #8c8c8c;border-left:none"></div>
  <svg class="a" style="left:40px;top:472px" width="528" height="260" viewBox="40 472 528 260">
    <rect x="99.5" y="494" width="327.5" height="187.5" fill="#c0c0c0"/>
    <g stroke="#858585" stroke-width="1.3">
      <path d="M93 494.5 H427 M93 541.3 H427 M93 588.2 H427 M93 634.8 H427"/>
    </g>
    <rect x="122.7" y="677.7" width="31.5" height="3.8" fill="#4472c4"/>
    <rect x="154.2" y="634.8" width="31.8" height="46.7" fill="#e0823f"/>
    <rect x="232" y="662.7" width="32.2" height="18.8" fill="#4472c4"/>
    <rect x="264.2" y="588.2" width="30.8" height="93.3" fill="#e0823f"/>
    <rect x="341" y="634.8" width="31.8" height="46.7" fill="#4472c4"/>
    <rect x="372.8" y="541.3" width="31.2" height="140.2" fill="#e0823f"/>
    <rect x="99.5" y="494" width="327.5" height="187.5" fill="none" stroke="#808080" stroke-width="2"/>
    <path d="M93 681.5 H99 M99.4 681 V688.5 M209.2 681 V688.5 M318.3 681 V688.5 M426.7 681 V688.5" stroke="#808080" stroke-width="1.4"/>
    <rect x="459" y="578" width="11" height="11" fill="#4472c4"/>
    <rect x="459" y="615" width="11" height="11" fill="#e0823f"/>
  </svg>
  <div class="t" style="left:40px;top:486px;width:41.5px;text-align:right;font-size:17px;color:#000;letter-spacing:.5px">200</div>
  <div class="t" style="left:40px;top:533px;width:41.5px;text-align:right;font-size:17px;color:#000;letter-spacing:.5px">150</div>
  <div class="t" style="left:40px;top:580px;width:41.5px;text-align:right;font-size:17px;color:#000;letter-spacing:.5px">100</div>
  <div class="t" style="left:40px;top:626px;width:41.5px;text-align:right;font-size:17px;color:#000;letter-spacing:.5px">50</div>
  <div class="t" style="left:40px;top:673px;width:41.5px;text-align:right;font-size:17px;color:#000;letter-spacing:.5px">0</div>
  <div class="t" style="left:112px;top:701px;font-size:17.5px;color:#000">Category1</div>
  <div class="t" style="left:222px;top:701px;font-size:17.5px;color:#000">Category2</div>
  <div class="t" style="left:331px;top:701px;font-size:17.5px;color:#000">Category3</div>
  <div class="t" style="left:474.5px;top:576px;font-size:17.5px;color:#000;letter-spacing:.4px">Column1</div>
  <div class="t" style="left:474.5px;top:612px;font-size:17.5px;color:#000;letter-spacing:.4px">Column2</div>

  <!-- ===== SHEET TABS ===== -->
  <div class="a" style="left:0;top:958px;width:1650px;height:52px;background:#343434"></div>
  <div class="a" style="left:0;top:1010px;width:1650px;height:38px;background:linear-gradient(#4a4a4a,#3c3c3c)"></div>
  <div class="a" style="left:272px;top:959px;width:292px;height:51px;background:#232323;border-top:1px solid #555"></div>
  <div class="a" style="left:564px;top:959px;width:1086px;height:1px;background:#555"></div>
  <div class="a" style="left:563px;top:960px;width:2px;height:41px;background:#4a4a4a"></div>
  <div class="a" style="left:638px;top:960px;width:2px;height:41px;background:#4a4a4a"></div>
  <div class="a" style="left:115px;top:957px;width:158px;height:46px;background:#fff;border-radius:0 0 5px 5px;box-shadow:0 1px 0 #777"></div>
  <svg class="a" style="left:22px;top:974px" width="66" height="24" viewBox="0 0 66 24">
    <path d="M16 2 L2 12 L16 22 Z" fill="#6b6b6b"/>
    <path d="M48 2 L62 12 L48 22 Z" fill="#6b6b6b"/>
  </svg>
  <div class="t" style="left:154px;top:973px;font-size:22px;font-weight:bold;color:#3e8a59;letter-spacing:.6px">Sheet1</div>
  <div class="t" style="left:312px;top:973px;font-size:22px;color:#858585;-webkit-text-stroke:.6px #858585;letter-spacing:1.2px">Evaluation Warning</div>
  <svg class="a" style="left:590px;top:973px" width="24" height="22" viewBox="0 0 24 22">
    <path d="M12 1 V21 M2 11 H22" stroke="#bdbdbd" stroke-width="3.4"/>
  </svg>

  <!-- ===== STATUS BAR ===== -->
  <div class="a" style="left:0;top:1010px;width:1650px;height:2px;background:#1a1a1a"></div>
  <div class="t" style="left:42.5px;top:1021.7px;font-size:23.5px;color:#f0f0f0">Ready</div>
  <svg class="a" style="left:140px;top:1012px" width="50" height="36" viewBox="140 1012 50 36">
    <circle cx="164.7" cy="1021.5" r="3.6" fill="none" stroke="#f4f4f4" stroke-width="1.9"/>
    <path d="M153 1024.5 Q151 1027 153.5 1028.5 L159.5 1030 Q160.5 1035 158.5 1040 L157 1045 Q156.5 1048 159 1048 Q160.5 1047.5 161 1046 L163.5 1040 Q164.5 1038.5 165.5 1040 L166.5 1041.5" fill="none" stroke="#f4f4f4" stroke-width="1.9" stroke-linecap="round" stroke-linejoin="round"/>
    <path d="M153 1024.5 Q154.5 1023 157 1024.5 Q161 1026 165 1026 Q169 1026 174.5 1023.5 Q177.5 1022.5 178 1025 Q178.5 1027 176 1028 L171.5 1030" fill="none" stroke="#f4f4f4" stroke-width="1.9" stroke-linecap="round" stroke-linejoin="round"/>
    <path d="M167.7 1034 L181.7 1048 M181.7 1034 L167.7 1048" stroke="#f4f4f4" stroke-width="1.7"/>
  </svg>
  <div class="t" style="left:190px;top:1021.7px;font-size:23.5px;color:#f0f0f0;letter-spacing:.8px">Accessibility: Investigate</div>
  <div class="a" style="left:1012px;top:1012px;width:74px;height:36px;background:#585858"></div>
  <svg class="a" style="left:1034px;top:1018px" width="30" height="30" viewBox="0 0 30 30">
    <rect x="3" y="3" width="24" height="25" rx="2" fill="none" stroke="#fff" stroke-width="2.2"/>
    <path d="M3 11 H27 M3 19.5 H27 M11 3 V28 M19 3 V28" stroke="#fff" stroke-width="2"/>
  </svg>
  <svg class="a" style="left:1105px;top:1018px" width="32" height="30" viewBox="0 0 32 30">
    <rect x="3" y="3" width="26" height="25" rx="2" fill="none" stroke="#fff" stroke-width="2.2"/>
    <rect x="9" y="7" width="14" height="17" fill="none" stroke="#fff" stroke-width="2.2"/>
    <path d="M12 10.5 H20 M12 15 H20 M12 19.5 H20" stroke="#fff" stroke-width="2"/>
  </svg>
  <svg class="a" style="left:1176px;top:1018px" width="32" height="30" viewBox="0 0 32 30">
    <rect x="3" y="3" width="26" height="25" rx="2" fill="none" stroke="#fff" stroke-width="2.2"/>
    <path d="M11 3 V17.5 M18.5 3 V17.5 M3 17.5 H19.5" stroke="#fff" stroke-width="2.2"/>
  </svg>
  <div class="a" style="left:1243px;top:1031px;width:17px;height:4px;background:#eee"></div>
  <div class="a" style="left:1274px;top:1029px;width:200px;height:8px;border-radius:4px;background:#727272"></div>
  <div class="a" style="left:1358px;top:1017px;width:31px;height:31px;border-radius:50%;background:#a8a8a8"></div>
  <svg class="a" style="left:1487px;top:1024px" width="18" height="18" viewBox="0 0 18 18">
    <path d="M9 0 V18 M0 9 H18" stroke="#eee" stroke-width="3.6"/>
  </svg>
  <div class="t" style="left:1537.5px;top:1021px;font-size:24px;color:#eaeaea;letter-spacing:.3px">100%</div>
  <div class="a" style="left:1648px;top:0;width:2px;height:1048px;background:rgba(130,130,130,.55)"></div>
</div>
</body></html>
